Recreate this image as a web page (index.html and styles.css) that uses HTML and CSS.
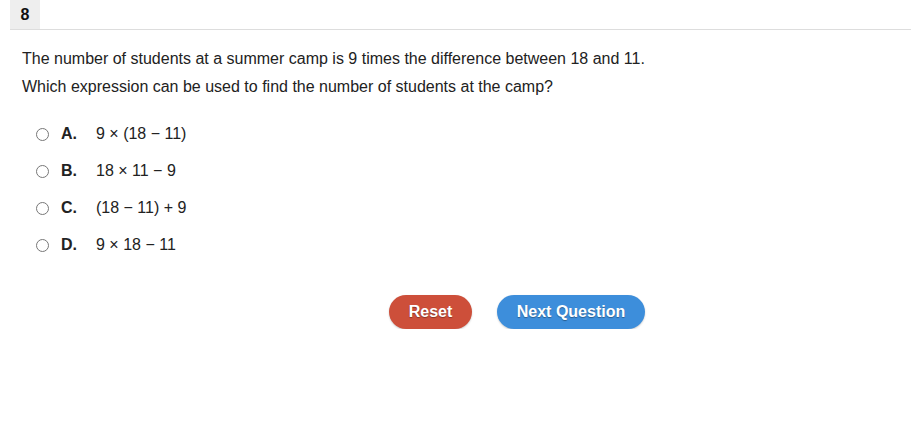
FILE: index.html
```html
<!DOCTYPE html>
<html>
<head>
<meta charset="utf-8">
<link rel="stylesheet" href="styles.css">
</head>
<body>
<div class="header">
  <div class="qnum">8</div>
</div>
<div class="content">
  <p class="stem">The number of students at a summer camp is 9 times the difference between 18 and 11.</p>
  <p class="stem">Which expression can be used to find the number of students at the camp?</p>
  <div class="options">
    <label class="option"><span class="radio"></span><span class="letter">A.</span><span class="expr">9 × (18 − 11)</span></label>
    <label class="option"><span class="radio"></span><span class="letter">B.</span><span class="expr">18 × 11 − 9</span></label>
    <label class="option"><span class="radio"></span><span class="letter">C.</span><span class="expr">(18 − 11) + 9</span></label>
    <label class="option"><span class="radio"></span><span class="letter">D.</span><span class="expr">9 × 18 − 11</span></label>
  </div>
  <div class="buttons">
    <button class="btn reset">Reset</button>
    <button class="btn next">Next Question</button>
  </div>
</div>
</body>
</html>
```
FILE: styles.css
```css
html, body {
  margin: 0;
  padding: 0;
  background: #ffffff;
  font-family: "Liberation Sans", Arial, sans-serif;
  color: #222222;
}
.header {
  margin-left: 10px;
  height: 29px;
  border-bottom: 1px solid #dddddd;
}
.qnum {
  width: 30px;
  height: 29px;
  background: #eeeeee;
  font-weight: bold;
  font-size: 16px;
  line-height: 30px;
  text-align: center;
  color: #111111;
}
.content {
  padding-left: 22px;
}
.stem {
  margin: 0;
  font-size: 16px;
  line-height: 28px;
}
.content .stem:first-child {
  margin-top: 15px;
}
.options {
  margin-top: 21px;
  display: flex;
  flex-direction: column;
  gap: 13px;
}
.option {
  display: flex;
  align-items: center;
  height: 24px;
  font-size: 16px;
}
.radio {
  width: 11px;
  height: 11px;
  border: 1px solid #777777;
  border-radius: 50%;
  margin-left: 14px;
  margin-right: 12px;
  background: #fff;
}
.letter {
  font-weight: bold;
  width: 35px;
}
.buttons {
  display: flex;
  gap: 25px;
  margin-top: 38px;
  padding-left: 367px;
}
.btn {
  border: none;
  border-radius: 17px;
  height: 34px;
  color: #ffffff;
  font-family: "Liberation Sans", Arial, sans-serif;
  font-weight: bold;
  font-size: 16px;
  text-shadow: 0 1px 1px rgba(0,0,0,0.35);
  padding: 0;
}
.reset {
  width: 83px;
  background: #cd4f3a;
  box-shadow: 0 1px 2px rgba(0,0,0,0.2);
}
.next {
  width: 148px;
  background: #3d8edb;
  box-shadow: 0 1px 2px rgba(0,0,0,0.2);
}
```
